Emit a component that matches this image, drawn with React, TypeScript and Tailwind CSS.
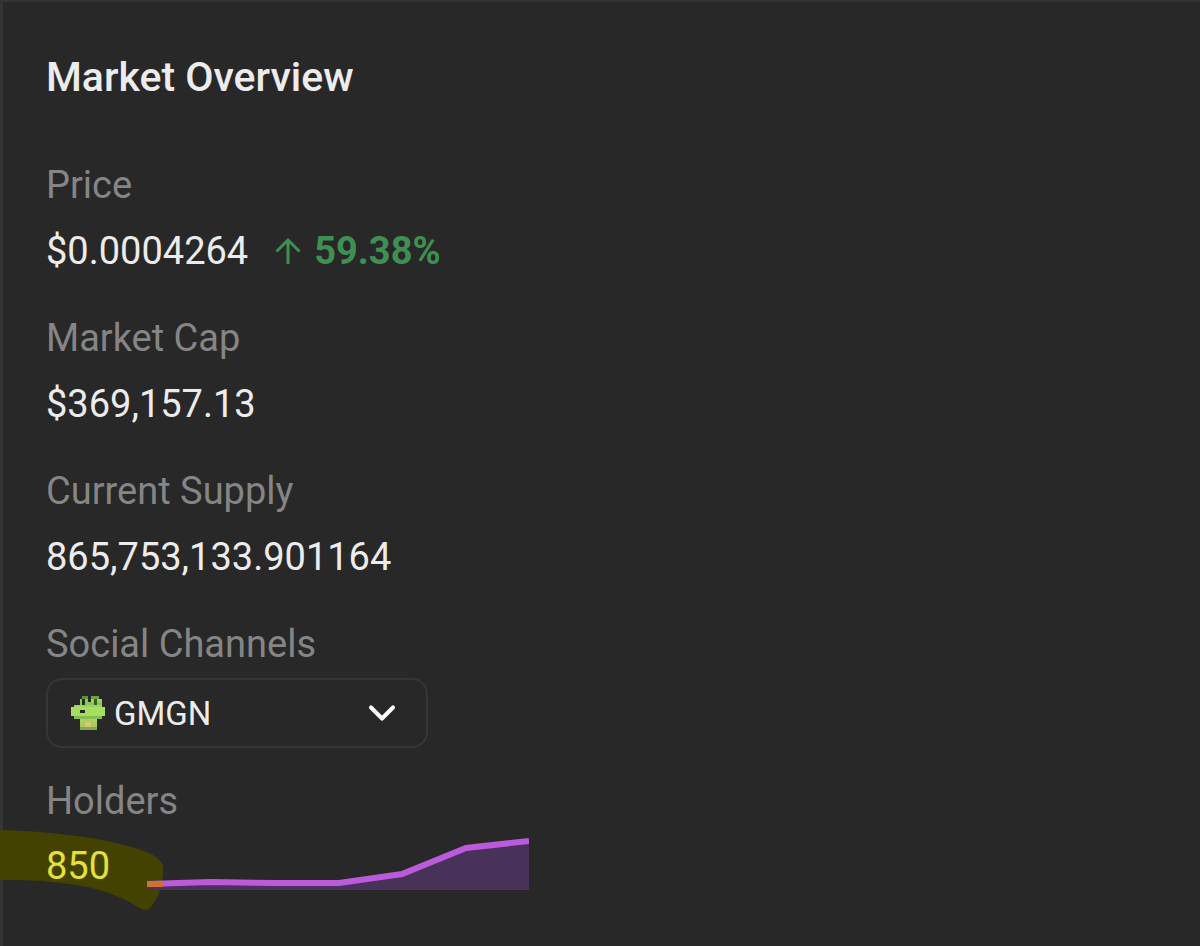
import { ChevronDown } from 'lucide-react';

const rows = [
  { label: 'Market Cap', value: '$369,157.13' },
  { label: 'Current Supply', value: '865,753,133.901164' },
];

// Pixel art frog, [x, y, width, height, colour] on a 12 x 12 grid
const frogPixels: [number, number, number, number, string][] = [
  [4, 0, 2, 1, '#5f8f38'],
  [7, 0, 3, 1, '#6f9f40'],
  [3, 1, 3, 1, '#8cc653'],
  [7, 1, 4, 1, '#9ad65c'],
  [3, 2, 8, 1, '#8cc653'],
  [1, 3, 10, 1, '#9ad65c'],
  [0, 4, 12, 3, '#a4df62'],
  [1, 7, 10, 1, '#86bc50'],
  [3, 8, 6, 1, '#a6d860'],
  [3, 9, 6, 2, '#a9cb5e'],
  [5, 9, 2, 2, '#d8c77a'],
  [3, 11, 6, 1, '#7fa848'],
  [4, 1, 1, 2, '#24301c'],
  [8, 1, 1, 2, '#3c5a28'],
  [3, 5, 2, 1, '#22281a'],
];

function Frog() {
  return (
    <svg width="34" height="34" viewBox="0 0 12 12" shapeRendering="crispEdges" className="blur-[0.6px]">
      {frogPixels.map(([x, y, w, h, c], i) => (
        <rect key={i} x={x} y={y} width={w} height={h} fill={c} />
      ))}
    </svg>
  );
}

function Sparkline() {
  const line = '0,46 63,44 128,45 192,45 255,36 319,10 382,3';
  return (
    <svg width="382" height="54" viewBox="0 -1 382 54" className="block">
      <polygon points={`0,52 ${line} 382,52`} fill="#49325a" />
      <polyline points={line} fill="none" stroke="#bb5bdc" strokeWidth="6" />
      <rect x="0" y="43" width="16" height="6" fill="#cf6f3a" />
    </svg>
  );
}

export default function App() {
  return (
    <div className="relative w-[1200px] h-[946px] overflow-hidden bg-[#282828] shadow-[inset_3px_2px_0_#343434] font-['Roboto',sans-serif] pl-[46px] pt-[52px]">
      {/* marker stroke behind the holder count */}
      <svg width="170" height="90" viewBox="0 0 170 90" className="absolute left-0 top-[828px]">
        <path d="M0 2C40 3 90 8 120 16C145 22 160 28 163 38C164 50 160 70 150 80C147 83 143 82 138 79C120 68 100 60 70 56C40 52 20 52 0 52Z" fill="#444200" />
      </svg>

      <h1 className="relative text-[41px] leading-[50px] font-medium text-[#ececec]">Market Overview</h1>

      <div className="mt-[58px] text-[38px] leading-[50px] text-[#858585]">Price</div>
      <div className="mt-[16px] flex items-center h-[50px]">
        <span className="text-[38px] text-[#ececec]">$0.0004264</span>
        <svg width="28" height="28" viewBox="0 0 28 28" fill="none" stroke="#3f8f52" strokeWidth="3" className="ml-[26px]">
          <path d="M14 27V3M2.5 14.5L14 3l11.5 11.5" />
        </svg>
        <span className="ml-[12px] text-[38px] font-bold text-[#3f8f52]">59.38%</span>
      </div>

      {rows.map((r) => (
        <div key={r.label}>
          <div className="mt-[37px] text-[38px] leading-[50px] text-[#858585]">{r.label}</div>
          <div className="mt-[16px] text-[38px] leading-[50px] text-[#ececec]">{r.value}</div>
        </div>
      ))}

      <div className="mt-[37px] text-[38px] leading-[50px] text-[#858585]">Social Channels</div>
      <div className="mt-[9px] w-[382px] h-[70px] rounded-[16px] border-[2px] border-[#363636] flex items-center pl-[23px] pr-[22px]">
        <Frog />
        <span className="ml-[9px] mt-[2px] text-[33px] text-[#ececec]">GMGN</span>
        <ChevronDown className="ml-auto text-white" size={44} strokeWidth={2.2} />
      </div>

      <div className="mt-[28px] text-[38px] leading-[50px] text-[#858585]">Holders</div>
      <div className="relative flex items-end h-[65px]">
        <span className="text-[38px] leading-[50px] text-[#e4e03c] w-[101px]">850</span>
        <Sparkline />
      </div>
    </div>
  );
}
